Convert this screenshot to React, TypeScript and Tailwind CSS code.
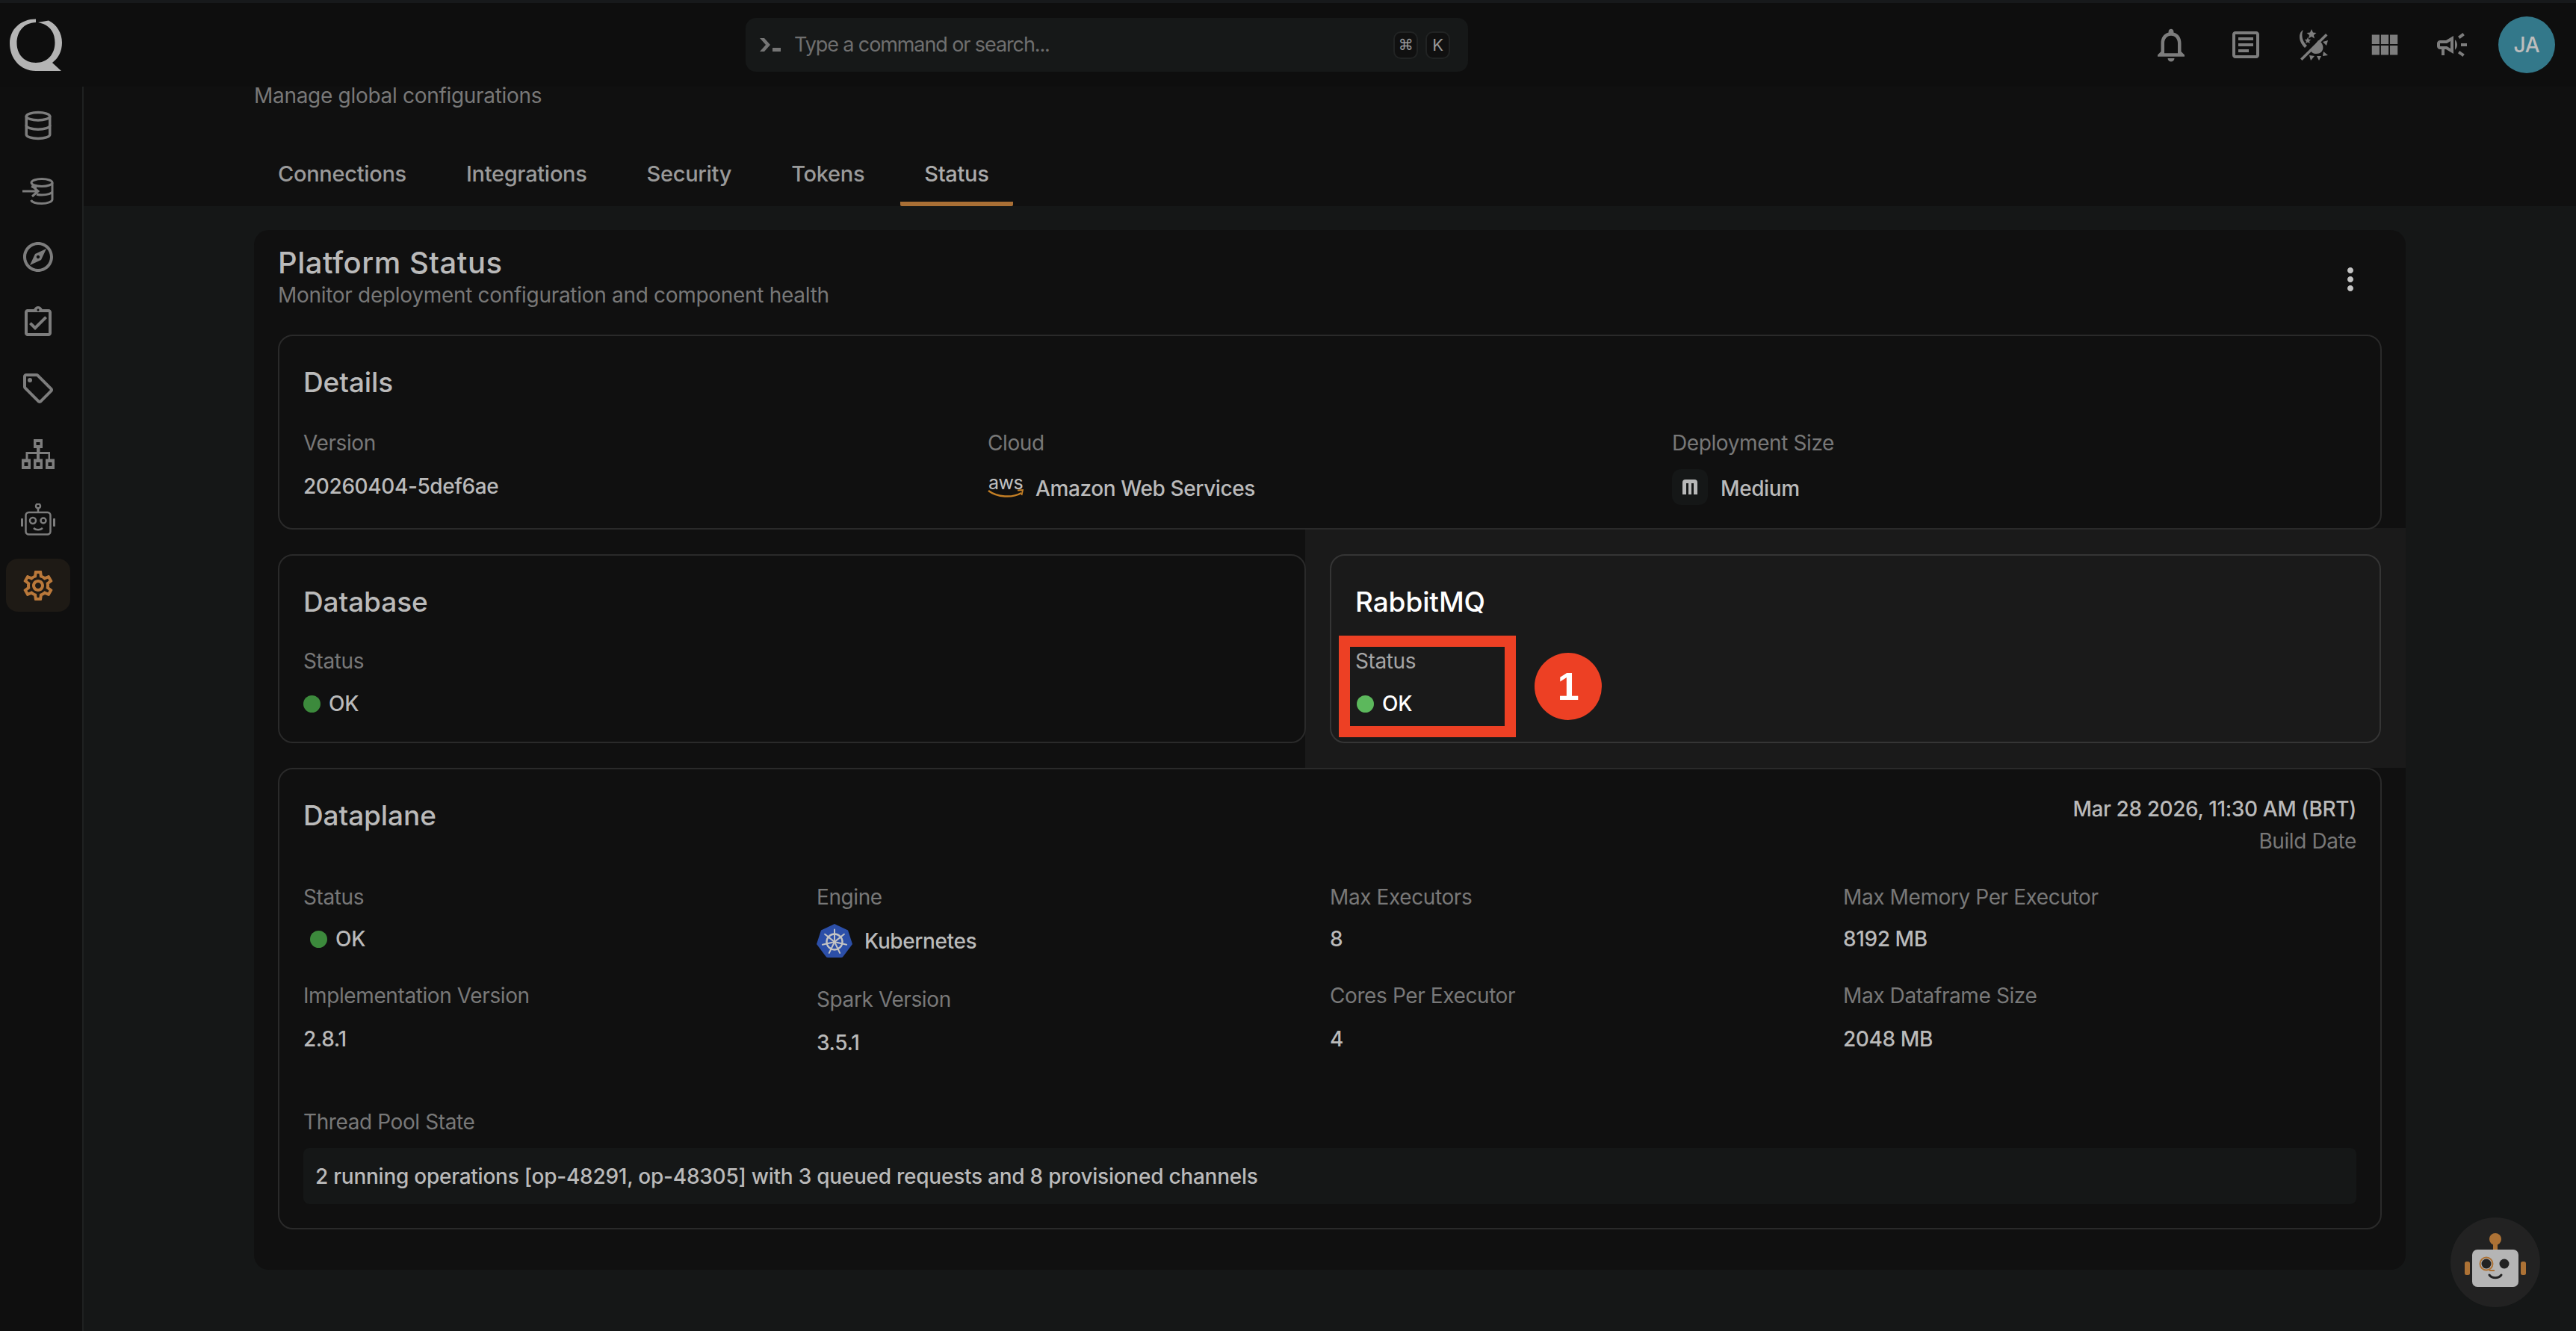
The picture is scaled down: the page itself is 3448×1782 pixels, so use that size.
import React from "react";
import { Database } from "lucide-react";
import {
  MdOutlineExplore, MdOutlineLocalOffer, MdOutlineAssignmentTurnedIn, MdOutlineSettings,
  MdOutlineNotifications, MdOutlineArticle, MdViewModule, MdOutlineCampaign, MdMoreVert,
} from "react-icons/md";

function Logo() {
  return (
    <svg width="70" height="70" viewBox="0 0 70 70">
      <path fillRule="evenodd" fill="#b4b4b4" d="M35 0.5 L35 5 C19 5.5 9.5 17 9.5 33 C9.5 47 19 59 35 59 C50 59 60.5 48 60.5 32 C60.5 20 55 11 45 7 L38 5 L52 2.5 C63 8 70 19 70 32 C70 44 65 53 57 59 L69 70 L35 70 C14 70 0 53 0 33 C0 14 15 0.5 35 0.5 Z" />
    </svg>
  );
}

function DbIn() {
  return (
    <svg width="42" height="36" viewBox="0 0 42 36" fill="none" stroke="#7d7d7d" strokeWidth="3">
      <ellipse cx="26" cy="6.5" rx="14" ry="5" />
      <path d="M40 6.500V29c0 3-6.500 5.500-14 5.500S13 33 11.500 30M40 18c0 3-6.500 5-14 5-3 0-5-.3-7-.8M12 11.500c2 .8 4 1.500 7 1.800" />
      <path d="M0 18h20M13 11l8 7-8 7" />
    </svg>
  );
}

function SiteMap() {
  return (
    <svg width="44" height="40" viewBox="0 0 44 40" fill="#7d7d7d">
      <path fillRule="evenodd" d="M16 0h12v12h-3.500v5H38v9.500h6V40H32V26.500h3.500V20H24v6.500h4V40H16V26.500h4V20H8.500v6.500H12V40H0V26.500h5.500V17H20v-5h-4V0Zm3.500 4v4h5V4h-5ZM3.500 31v5h5v-5h-5Zm16 0v5h5v-5h-5Zm16 0v5h5v-5h-5Z" />
    </svg>
  );
}

function SideBot() {
  return (
    <svg width="46" height="43" viewBox="0 0 46 43" fill="none" stroke="#7d7d7d" strokeWidth="2.500">
      <circle cx="23" cy="3.500" r="3" />
      <path d="M23 7v5" />
      <rect x="6.500" y="12" width="33" height="29.500" rx="4" />
      <circle cx="16" cy="23" r="4" />
      <circle cx="30" cy="23" r="3.500" />
      <path d="M17 33c3 3 9 3 12 0" />
      <rect x="0" y="20" width="3" height="11" rx="1" fill="#7d7d7d" stroke="none" />
      <rect x="43" y="20" width="3" height="11" rx="1" fill="#7d7d7d" stroke="none" />
    </svg>
  );
}

function DayNight() {
  return (
    <svg width="42" height="42" viewBox="0 0 42 42" fill="#7d7d7d">
      <path d="M7 1 C1 4 -1 15 9 25 L12 22 C5 16 4 7 7 1Z" />
      <path d="M18 0l2 4.500 4.500.5-3.500 3 1 4.500-4-2.500-4 2.500 1-4.500-3.500-3 4.500-.5Z" />
      <path d="M13 11l1.300 2.800 3 .3-2.200 2 .6 3-2.700-1.600-2.700 1.600.6-3-2.200-2 3-.3Z" />
      <path d="M37 6l2.500 2.500L5.500 42 3 39.500Z" />
      <path d="M27 15 C36 19 36 33 24 33 C20 33 18 31 17 29Z" />
      <path d="M33 17l7-2-2 7ZM34 30l6 5-7 1ZM15 35l7 1-5 6ZM25 36l6 0-3 6Z" />
    </svg>
  );
}

function Terminal() {
  return (
    <svg width="28" height="18" viewBox="0 0 28 18" fill="#757575">
      <path d="M0 0h6l8 9-8 9H0l8-9Z" />
      <rect x="17" y="13" width="11" height="5" />
    </svg>
  );
}

function AwsLogo() {
  return (
    <div className="relative flex h-[30px] w-[48px] flex-col items-center">
      <span className="text-[25px] leading-[18px] font-normal tracking-[-0.5px] text-[#c0c0c0]">aws</span>
      <svg width="48" height="12" viewBox="0 0 48 12" fill="none" className="absolute bottom-0 left-0">
        <path d="M1 2c12 9 32 10 44 3" stroke="#c47f25" strokeWidth="2.500" />
        <path d="M40 1.500l7-.5-1.500 7" stroke="#c47f25" strokeWidth="1.800" />
      </svg>
    </div>
  );
}

function K8s() {
  const spokes = [0, 1, 2, 3, 4, 5, 6].map((k) => {
    const a = ((-90 + (k * 360) / 7) * Math.PI) / 180;
    return { x: 24 + Math.cos(a) * 16.5, y: 24 + Math.sin(a) * 16.5, x0: 24 + Math.cos(a) * 3, y0: 24 + Math.sin(a) * 3 };
  });
  return (
    <svg width="48" height="46" viewBox="0 0 48 46">
      <path d="M24 0 L42 8.500 L48 27 L36 43 Q35 45 33 45 L15 45 Q13 45 12 43 L0 27 L6 8.500Z" fill="#2c4fa8" />
      <g stroke="#c4c4c4" fill="none" strokeLinecap="round">
        <circle cx="24" cy="24" r="10.500" strokeWidth="2.400" />
        {spokes.map((s, i) => (
          <line key={i} x1={s.x0} y1={s.y0} x2={s.x} y2={s.y} strokeWidth="2" />
        ))}
      </g>
      <circle cx="24" cy="24" r="2.500" fill="#c4c4c4" />
    </svg>
  );
}

function MIcon() {
  return (
    <svg width="20" height="20" viewBox="0 0 20 20" fill="#b8b8b8">
      <path fillRule="evenodd" d="M0 4 Q0 0 4 0 H16 Q20 0 20 4 V20 H15 V5 H12 V20 H8 V5 H5 V20 H0Z" />
    </svg>
  );
}

function ChatBot() {
  return (
    <svg width="120" height="120" viewBox="0 0 120 120">
      <circle cx="60" cy="60" r="60" fill="#222222" />
      <circle cx="60" cy="29" r="8" fill="#ad7235" />
      <rect x="57" y="34" width="6" height="9" fill="#ad7235" />
      <rect x="29" y="43" width="62" height="50" rx="7" fill="#b5b5b5" />
      <rect x="19" y="59" width="7" height="18" rx="2.500" fill="#ad7235" />
      <rect x="94" y="59" width="7" height="18" rx="2.500" fill="#ad7235" />
      <circle cx="48" cy="62" r="8.500" fill="none" stroke="#ad7235" strokeWidth="2" />
      <path d="M52 71h7" stroke="#ad7235" strokeWidth="2" />
      <circle cx="48" cy="62" r="6.500" fill="#222222" />
      <circle cx="72" cy="62" r="6.500" fill="#222222" />
      <path d="M52 77c4 5 12 5 16 0" stroke="#222222" strokeWidth="3" fill="none" strokeLinecap="round" />
    </svg>
  );
}

const navIconBtn = "flex w-[86px] h-[71px] items-center justify-center rounded-[16px]";

function Label({ children }: { children: React.ReactNode }) {
  return <div className="text-[28px] leading-[36px] tracking-[-0.4px] text-[#787878]">{children}</div>;
}
function Value({ children, className = "" }: { children: React.ReactNode; className?: string }) {
  return <div className={"text-[28px] leading-[36px] font-medium tracking-[-0.4px] text-[#bababa] " + className}>{children}</div>;
}
function Status({ dot, text, className = "" }: { dot: string; text: string; className?: string }) {
  return (
    <div className={"flex items-center gap-[11px] text-[28px] leading-[36px] font-medium " + text + " " + className}>
      <span className={"h-[23px] w-[23px] rounded-full " + dot} />
      <span>OK</span>
    </div>
  );
}

export default function App() {
  return (
    <div className="relative flex h-[1782px] w-[3448px] flex-col overflow-hidden bg-[#151717] text-[#bababa] [font-family:Inter,sans-serif] tracking-[-0.3px]">
      <header className="flex h-[116px] shrink-0 items-center border-t-[4px] border-[#17191b] bg-[#0e0e0e]">
        <div className="flex w-[112px] shrink-0 pl-[13px]"><Logo /></div>
        <div className="ml-[886px] flex h-[72px] w-[967px] items-center rounded-[14px] bg-[#161818] pr-[24px] pl-[19px]">
          <Terminal />
          <span className="ml-[18px] flex-1 text-[27px] tracking-[-1.1px] text-[#6f6f6f]">Type a command or search...</span>
          <span className="flex h-[37px] w-[33px] items-center justify-center rounded-[10px] border-2 border-[#212323] bg-[#101010] text-[20px] text-[#999] [font-family:'DejaVu_Sans',sans-serif]">⌘</span>
          <span className="ml-[10px] flex h-[37px] w-[33px] items-center justify-center rounded-[10px] border-2 border-[#212323] bg-[#101010] text-[22px] text-[#999]">K</span>
        </div>
        <div className="ml-auto flex items-center pr-[28px]">
          <MdOutlineNotifications size={54} color="#7d7d7d" />
          <MdOutlineArticle size={48} color="#7d7d7d" className="ml-[49px]" />
          <span className="ml-[46px] flex"><DayNight /></span>
          <MdViewModule size={46} color="#7d7d7d" className="ml-[51px]" />
          <MdOutlineCampaign size={48} color="#7d7d7d" className="ml-[43px]" />
          <div className="ml-[38px] flex h-[76px] w-[76px] items-center justify-center rounded-full bg-[#33788a] text-[28px] font-medium text-[#bdbdbd]">JA</div>
        </div>
      </header>

      <div className="flex min-h-0 flex-1">
        <aside className="flex w-[112px] shrink-0 flex-col items-center border-r-2 border-[#1f2121] bg-[#0f0f0f]">
          <div className="flex w-full flex-col items-center gap-[17px] pt-[16px] pr-[8px]">
            <div className={navIconBtn}><Database size={42} color="#7d7d7d" strokeWidth={2} /></div>
            <div className={navIconBtn}><DbIn /></div>
            <div className={navIconBtn}><MdOutlineExplore size={48} color="#7d7d7d" /></div>
            <div className={navIconBtn}><MdOutlineAssignmentTurnedIn size={48} color="#7d7d7d" /></div>
            <div className={navIconBtn}><MdOutlineLocalOffer size={48} color="#7d7d7d" /></div>
            <div className={navIconBtn}><SiteMap /></div>
            <div className={navIconBtn}><SideBot /></div>
            <div className={navIconBtn + " bg-[#1e1a15]"}><MdOutlineSettings size={48} color="#b9783a" /></div>
          </div>
        </aside>

        <main className="min-w-0 flex-1">
          <div className="h-[160px] bg-[#101010] pl-[228px]">
            <div className="text-[28px] leading-[24px] text-[#787878]">Manage global configurations</div>
            <nav className="mt-[52px] flex gap-[16px] text-[29px] leading-[36px] font-medium tracking-[-0.3px] text-[#9a9a9a]">
              <div className="border-b-[6px] border-transparent px-[32px] pt-[23px] pb-[19px]">Connections</div>
              <div className="border-b-[6px] border-transparent px-[32px] pt-[23px] pb-[19px]">Integrations</div>
              <div className="border-b-[6px] border-transparent px-[32px] pt-[23px] pb-[19px]">Security</div>
              <div className="border-b-[6px] border-transparent px-[32px] pt-[23px] pb-[19px]">Tokens</div>
              <div className="rounded-b-[2px] border-b-[6px] border-[#a96f35] px-[32px] pt-[23px] pb-[19px] text-[#ababab]">Status</div>
            </nav>
          </div>

          <div className="px-[228px] pt-[32px]">
            <section className="relative rounded-[20px] bg-[#101010] px-[32px] pt-[20px] pb-[54px]">
              <div className="flex items-start justify-between">
                <div>
                  <h1 className="text-[40px] leading-[48px] font-medium tracking-[0.5px] text-[#bababa]">Platform Status</h1>
                  <p className="mt-[1px] text-[28px] leading-[36px] text-[#787878]">Monitor deployment configuration and component health</p>
                </div>
                <MdMoreVert size={48} color="#c4c4c4" className="mt-[22px] mr-[18px]" />
              </div>

              <div className="mt-[35px] flex flex-col gap-[33px]">
                <div className="relative z-10 h-[261px] rounded-[20px] border-2 border-[#2a2a2a] px-[32px] pt-[40px]">
                  <h2 className="text-[37px] leading-[44px] font-medium tracking-[-0.1px] text-[#bababa]">Details</h2>
                  <div className="mt-[41px] grid grid-cols-3">
                    <div><Label>Version</Label><Value className="mt-[22px]">20260404-5def6ae</Value></div>
                    <div>
                      <Label>Cloud</Label>
                      <div className="mt-[17px] flex h-[48px] items-center gap-[16px]"><AwsLogo /><Value className="mt-[4px]">Amazon Web Services</Value></div>
                    </div>
                    <div>
                      <Label>Deployment Size</Label>
                      <div className="mt-[17px] flex h-[48px] items-center gap-[17px]">
                        <span className="flex h-[48px] w-[48px] items-center justify-center rounded-[12px] bg-[#151717]"><MIcon /></span>
                        <Value className="mt-[4px]">Medium</Value>
                      </div>
                    </div>
                  </div>
                </div>

                <div className="grid grid-cols-[1376px_1407px] gap-[32px]">
                  <div className="relative z-10 h-[253px] rounded-[20px] border-2 border-[#2a2a2a] px-[32px] pt-[40px]">
                    <h2 className="text-[37px] leading-[44px] font-medium tracking-[-0.1px] text-[#bababa]">Database</h2>
                    <div className="mt-[39px]"><Label>Status</Label></div>
                    <Status dot="bg-[#3c8a3c]" text="text-[#bababa]" className="mt-[21px]" />
                  </div>
                  <div className="relative h-[253px]">
                    <div className="absolute -top-[35px] -right-[33px] -bottom-[33px] -left-[33px] bg-[#1a1a1a]" />
                    <div className="relative h-full rounded-[20px] border-2 border-[#353535] px-[32px] pt-[40px]">
                      <h2 className="text-[37px] leading-[44px] font-medium tracking-[-0.1px] text-[#ffffff]">RabbitMQ</h2>
                      <div className="mt-[39px] text-[28px] leading-[36px] tracking-[-0.4px] text-[#a6a6a6]">Status</div>
                      <Status dot="bg-[#5cb85c]" text="text-[#ffffff]" className="mt-[21px] pl-[2px]" />
                    </div>
                    <div className="absolute top-[109px] left-[12px] h-[136px] w-[237px] border-[15px] border-[#ed4024]" />
                    <div className="absolute top-[132px] left-[274px] flex h-[90px] w-[90px] items-center justify-center rounded-full bg-[#ed4024] text-[52px] font-semibold text-white [font-family:'Liberation_Sans',sans-serif]">1</div>
                  </div>
                </div>

                <div className="relative z-10 h-[618px] rounded-[20px] border-2 border-[#2a2a2a] px-[32px] pt-[35px]">
                  <div className="flex items-start justify-between">
                    <h2 className="mt-[5px] text-[37px] leading-[44px] font-medium tracking-[-0.1px] text-[#bababa]">Dataplane</h2>
                    <div className="text-right">
                      <Value>Mar 28 2026, 11:30 AM (BRT)</Value>
                      <div className="mt-[7px]"><Label>Build Date</Label></div>
                    </div>
                  </div>
                  <div className="mt-[39px] grid grid-cols-4">
                    <div>
                      <Label>Status</Label>
                      <Status dot="bg-[#3c8a3c]" text="text-[#bababa]" className="mt-[20px] pl-[9px]" />
                      <div className="mt-[40px]"><Label>Implementation Version</Label></div>
                      <Value className="mt-[22px]">2.8.1</Value>
                    </div>
                    <div>
                      <Label>Engine</Label>
                      <div className="mt-[18px] flex items-center gap-[16px]"><K8s /><Value>Kubernetes</Value></div>
                      <div className="mt-[37px]"><Label>Spark Version</Label></div>
                      <Value className="mt-[22px]">3.5.1</Value>
                    </div>
                    <div>
                      <Label>Max Executors</Label>
                      <Value className="mt-[20px]">8</Value>
                      <div className="mt-[40px]"><Label>Cores Per Executor</Label></div>
                      <Value className="mt-[22px]">4</Value>
                    </div>
                    <div>
                      <Label>Max Memory Per Executor</Label>
                      <Value className="mt-[20px]">8192 MB</Value>
                      <div className="mt-[40px]"><Label>Max Dataframe Size</Label></div>
                      <Value className="mt-[22px]">2048 MB</Value>
                    </div>
                  </div>
                  <div className="mt-[70px]"><Label>Thread Pool State</Label></div>
                  <div className="mt-[17px] flex h-[75px] items-center rounded-[8px] bg-[#151717] px-[16px]">
                    <div className="text-[28px] leading-[36px] font-medium tracking-[-0.25px] text-[#bababa]">2 running operations [op-48291, op-48305] with 3 queued requests and 8 provisioned channels</div>
                  </div>
                </div>
              </div>
            </section>
          </div>
        </main>
      </div>

      <div className="absolute top-[1630px] left-[3280px]"><ChatBot /></div>
    </div>
  );
}
